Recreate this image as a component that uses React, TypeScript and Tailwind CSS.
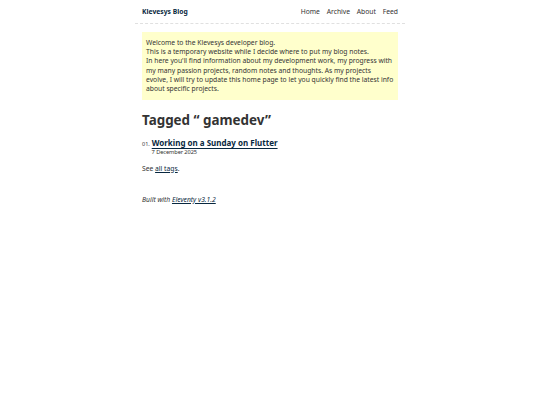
import React from "react";

export default function App() {
  return (
    <div className="min-h-[405px] bg-white text-[#333333] text-[6.75px] leading-[1.5]" style={{ fontFamily: '"Noto Sans", sans-serif' }}>
      <div className="mx-auto w-[270px]">
        <header className="flex items-center justify-between gap-[6.75px] px-[7px] py-[6.5px] border-b border-dashed border-[#e0e0e0]">
          <a href="#" className="grow font-bold text-[#082840] no-underline">Klevesys Blog</a>
          <nav className="flex gap-[6.75px]">
            <a href="#" className="text-[#333333] no-underline">Home</a>
            <a href="#" className="text-[#333333] no-underline">Archive</a>
            <a href="#" className="text-[#333333] no-underline">About</a>
            <a href="#" className="text-[#333333] no-underline">Feed</a>
          </nav>
        </header>
        <main className="px-[7px] pt-[7.4px]">
          <div className="bg-[#ffffcc] px-[4px] py-[6.4px] leading-[9.2px]">
            Welcome to the Klevesys developer blog.<br />
            This is a temporary website while I decide where to put my blog notes.<br />
            In here you'll find information about my development work, my progress with my many passion projects, random notes and thoughts. As my projects evolve, I will try to update this home page to let you quickly find the latest info about specific projects.
          </div>
          <h1 className="mt-[12px] mb-0 text-[13.4px] leading-[16px] font-bold">Tagged “ gamedev”</h1>
          <ol className="mt-[9.5px] pl-[9.6px] list-none">
            <li className="flex flex-wrap items-baseline">
              <span className="-ml-[9.6px] inline-block text-[5.5px] leading-none text-right">01.&nbsp;</span>
              <a href="#" className="basis-[calc(100%-9.6px)] pl-[0.5px] pr-[3.2px] text-[8px] leading-[11px] font-bold text-[#082840] underline decoration-1 underline-offset-[1.5px]">Working on a Sunday on Flutter</a>
              <span className="text-[5.7px] leading-[8px] tracking-[-0.1px]">7 December 2025</span>
            </li>
          </ol>
          <p className="mt-[7.7px] leading-[9.6px]">See <a href="#" className="text-[#082840] underline">all tags</a>.</p>
        </main>
        <footer className="px-[7px] pt-[21.4px]">
          <p className="italic leading-[9.6px]">Built with <a href="#" className="text-[#082840] underline">Eleventy v3.1.2</a></p>
        </footer>
      </div>
    </div>
  );
}
